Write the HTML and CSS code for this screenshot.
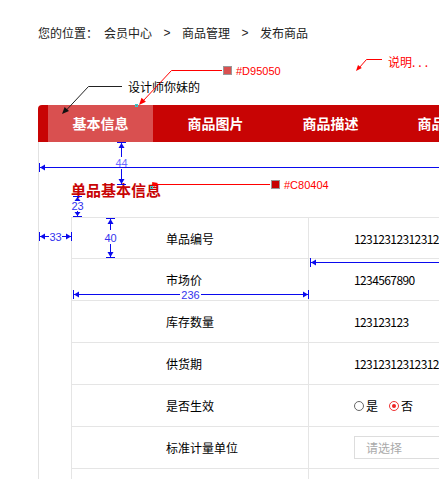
FILE: index.html
```html
<!DOCTYPE html>
<html lang="zh-CN">
<head>
<meta charset="utf-8">
<title>发布商品</title>
<link rel="stylesheet" href="styles.css">
</head>
<body>
<div class="page">
  <div class="crumbs">
    <span class="lead">您的位置：</span><span>会员中心</span><span class="sep">&gt;</span><span>商品管理</span><span class="sep">&gt;</span><span>发布商品</span>
  </div>

  <div class="panel">
    <div class="tabs">
      <div class="tab active">基本信息</div>
      <div class="tab">商品图片</div>
      <div class="tab">商品描述</div>
      <div class="tab">商品属性</div>
    </div>
    <div class="panel-body">
      <h2 class="title">单品基本信息</h2>
      <div class="table">
        <div class="row first"><div class="label">单品编号</div><div class="value num">123123123123123123123</div></div>
        <div class="row"><div class="label">市场价</div><div class="value num">1234567890</div></div>
        <div class="row"><div class="label">库存数量</div><div class="value num">123123123</div></div>
        <div class="row"><div class="label">供货期</div><div class="value num">12312312312312</div></div>
        <div class="row"><div class="label">是否生效</div><div class="value">
          <span class="radio"><span class="dot"></span>是</span>
          <span class="radio"><span class="dot on"></span>否</span>
        </div></div>
        <div class="row"><div class="label">标准计量单位</div><div class="value"><span class="select">请选择</span></div></div>
        <div class="row"><div class="label"></div><div class="value"></div></div>
      </div>
    </div>
  </div>

  <svg class="notes" width="439" height="479" viewBox="0 0 439 479">
    <!-- black annotation -->
    <polyline points="122,86.5 88.5,86.5 66,110.5" fill="none" stroke="#222" stroke-width="1"/>
    <polygon points="62,114 69,111 64.6,106.9" fill="#111"/>
    <text x="128" y="91.5" class="t-black">设计师你妹的</text>

    <!-- #D95050 annotation -->
    <polyline points="222,70.5 171.5,70.5 143,101" fill="none" stroke="#f00" stroke-width="1"/>
    <polygon points="139,105 145.9,101.8 141.5,97.8" fill="#f00"/>
    <rect x="135.5" y="104.5" width="2" height="2" fill="none" stroke="#3cc" stroke-width="1"/>
    <rect x="223.5" y="66.5" width="8" height="8" fill="#D95050" stroke="#999"/>
    <text x="236" y="75" class="t-code">#D95050</text>

    <!-- 说明 -->
    <polyline points="382,59.5 366.5,59.5 359,68" fill="none" stroke="#f00" stroke-width="1"/>
    <polygon points="356,71 361.8,68.1 358,64.9" fill="#f00"/>
    <text x="388" y="66.5" class="t-red">说明<tspan class="dots">...</tspan></text>

    <!-- #C80404 annotation -->
    <line x1="156" y1="184.5" x2="270" y2="184.5" stroke="#f00"/>
    <polygon points="152,182 158,183 154,187" fill="#f00"/>
    <rect x="150.5" y="186.5" width="2" height="2" fill="none" stroke="#3cc"/>
    <rect x="271.5" y="180.5" width="8" height="8" fill="#C80404" stroke="#999"/>
    <text x="284" y="189" class="t-code">#C80404</text>

    <!-- 44 -->
    <g class="m">
      <line x1="40" y1="167.5" x2="439" y2="167.5"/>
      <line x1="39.5" y1="163" x2="39.5" y2="172"/>
      <line x1="121.5" y1="143" x2="121.5" y2="157"/>
      <line x1="121.5" y1="169" x2="121.5" y2="184"/>
      <line x1="117" y1="142.5" x2="126" y2="142.5"/>
      <line x1="117" y1="184.5" x2="126" y2="184.5"/>
    </g>
    <g class="ma">
      <polygon points="40,167.5 45,164.5 45,170.5"/>
      <polygon points="121.5,143 118.5,148 124.5,148"/>
      <polygon points="121.5,184 118.5,179 124.5,179"/>
    </g>
    <text x="121.5" y="167" class="t-m light">44</text>

    <!-- 23 -->
    <g class="m">
      <line x1="73" y1="196.5" x2="82" y2="196.5"/>
      <line x1="73" y1="216.5" x2="82" y2="216.5"/>
      <line x1="77.5" y1="197" x2="77.5" y2="201"/>
      <line x1="77.5" y1="211" x2="77.5" y2="216"/>
    </g>
    <g class="ma">
      <polygon points="77.5,197 74.5,201 80.5,201"/>
      <polygon points="77.5,216 74.5,212 80.5,212"/>
    </g>
    <text x="77.5" y="210" class="t-m">23</text>

    <!-- 33 -->
    <g class="m">
      <line x1="39.5" y1="232" x2="39.5" y2="241"/>
      <line x1="71.5" y1="232" x2="71.5" y2="241"/>
      <line x1="40" y1="236.5" x2="49" y2="236.5"/>
      <line x1="62" y1="236.5" x2="71" y2="236.5"/>
    </g>
    <g class="ma">
      <polygon points="40,236.5 45,233.5 45,239.5"/>
      <polygon points="71,236.5 66,233.5 66,239.5"/>
    </g>
    <text x="55.5" y="240.5" class="t-m">33</text>

    <!-- 40 -->
    <g class="m">
      <line x1="106" y1="218.5" x2="115" y2="218.5"/>
      <line x1="106" y1="257.5" x2="115" y2="257.5"/>
      <line x1="110.5" y1="219" x2="110.5" y2="230"/>
      <line x1="110.5" y1="244" x2="110.5" y2="257"/>
    </g>
    <g class="ma">
      <polygon points="110.5,219 107.5,224 113.5,224"/>
      <polygon points="110.5,257 107.5,252 113.5,252"/>
    </g>
    <text x="110.5" y="241.5" class="t-m">40</text>

    <!-- 236 -->
    <g class="m">
      <line x1="73.5" y1="290" x2="73.5" y2="299"/>
      <line x1="308.5" y1="290" x2="308.5" y2="299"/>
      <line x1="74" y1="294.5" x2="180" y2="294.5"/>
      <line x1="201" y1="294.5" x2="308" y2="294.5"/>
    </g>
    <g class="ma">
      <polygon points="74,294.5 79,291.5 79,297.5"/>
      <polygon points="308,294.5 303,291.5 303,297.5"/>
    </g>
    <text x="190.5" y="298.5" class="t-m">236</text>

    <!-- right column guide -->
    <g class="m">
      <line x1="310.5" y1="258" x2="310.5" y2="267"/>
      <line x1="311" y1="262.5" x2="439" y2="262.5"/>
    </g>
    <g class="ma">
      <polygon points="311,262.5 316,259.5 316,265.5"/>
    </g>
  </svg>
</div>
</body>
</html>
```

FILE: styles.css
```css
html, body {
  margin: 0;
  padding: 0;
  overflow: hidden;
  background: #fff;
}

.page {
  position: relative;
  width: 439px;
  height: 479px;
  overflow: hidden;
  font-family: "Noto Sans CJK SC", "Liberation Sans", sans-serif;
  font-size: 12px;
  color: #111;
}

/* breadcrumb */
.crumbs {
  display: flex;
  white-space: nowrap;
  padding: 23px 0 0 38px;
  height: 20px;
  line-height: 20px;
  color: #222;
}
.crumbs .lead {
  margin-right: 6px;
}
.crumbs .sep {
  width: 30px;
  text-align: center;
  font-family: "Liberation Sans", sans-serif;
}

/* panel */
.panel {
  margin: 62px 0 0 38px;
  width: 700px;
}

.tabs {
  display: flex;
  gap: 10px;
  height: 37px;
  padding-left: 10px;
  background: #C80404;
  border-radius: 4px 0 0 0;
}
.tab {
  flex: none;
  width: 105px;
  line-height: 37px;
  text-align: center;
  color: #fff;
  font-size: 14px;
  font-weight: bold;
}
.tab.active {
  background: #D95050;
}

.panel-body {
  border-left: 1px solid #e2e2e2;
  padding: 0 0 0 32px;
}

.title {
  margin: 0;
  padding-top: 38px;
  line-height: 20px;
  font-size: 15px;
  font-weight: bold;
  color: #C80404;
}

.table {
  margin-top: 17px;
  width: 620px;
  border-top: 1px solid #e5e5e5;
  border-left: 1px solid #e5e5e5;
}
.row {
  display: grid;
  grid-template-columns: 237px 1fr;
  height: 42px;
  box-sizing: border-box;
  border-bottom: 1px solid #e5e5e5;
}
.row.first {
  height: 41px;
}
.label {
  display: flex;
  align-items: center;
  padding-left: 94px;
  border-right: 1px solid #e5e5e5;
  white-space: nowrap;
  color: #000;
}
.value {
  display: flex;
  align-items: center;
  gap: 11px;
  padding-left: 45px;
  white-space: nowrap;
  color: #000;
}
.num {
  letter-spacing: -0.6px;
}

.radio {
  display: inline-flex;
  align-items: center;
  gap: 2px;
}
.dot {
  position: relative;
  width: 10px;
  height: 10px;
  box-sizing: border-box;
  border: 1px solid #666;
  border-radius: 50%;
}
.dot.on {
  border-color: #e33;
}
.dot.on::after {
  content: "";
  position: absolute;
  left: 2px;
  top: 2px;
  width: 4px;
  height: 4px;
  border-radius: 50%;
  background: #e22;
}

.select {
  display: block;
  width: 200px;
  height: 23px;
  box-sizing: border-box;
  border: 1px solid #ddd;
  padding-left: 11px;
  line-height: 21px;
  color: #aaa;
}

/* annotation overlay */
.notes {
  position: absolute;
  left: 0;
  top: 0;
  pointer-events: none;
}
.notes .m line {
  stroke: #0a0aee;
  stroke-width: 1;
}
.notes .ma polygon {
  fill: #0a0aee;
}
.t-black {
  font-family: "Noto Sans CJK SC", sans-serif;
  font-size: 12px;
  fill: #000;
}
.t-red {
  font-family: "Noto Sans CJK SC", sans-serif;
  font-size: 12px;
  fill: #f00;
}
.t-red .dots {
  letter-spacing: 3px;
}
.t-code {
  font-family: "Liberation Sans", sans-serif;
  font-size: 11px;
  fill: #f00;
}
.t-m {
  font-family: "Liberation Sans", sans-serif;
  font-size: 11px;
  fill: #3333ee;
  text-anchor: middle;
}
.t-m.light {
  fill: #6a6aff;
}
```
